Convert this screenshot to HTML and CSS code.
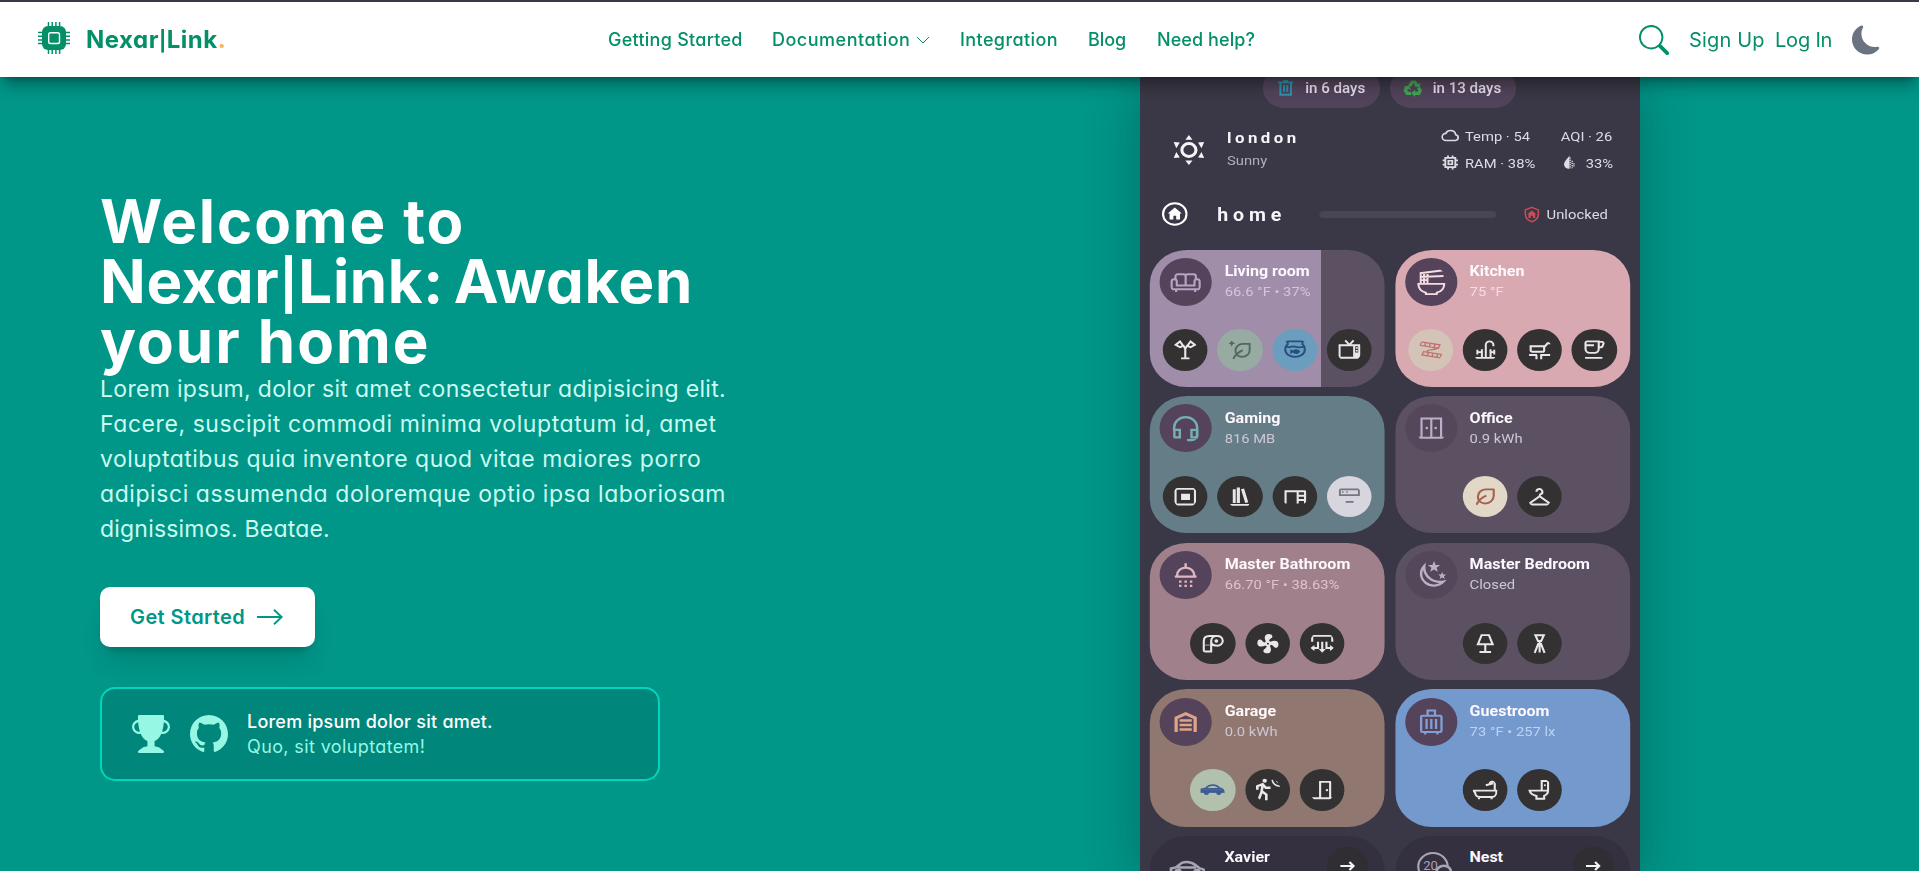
FILE: index.html
```html
<!DOCTYPE html>
<html lang="en">
<head>
<meta charset="utf-8">
<title>Nexar|Link</title>
<link rel="stylesheet" href="styles.css">
</head>
<body>
<svg class="sprite" aria-hidden="true">
  <symbol id="trash" viewBox="0 0 24 24"><path d="M3 4.500h18M5.500 5v16h13V5M10 8v9M14 8v9M9 2.500h6" fill="none" stroke="currentColor" stroke-width="2.400"/></symbol>
  <symbol id="recycle" viewBox="0 0 24 24"><path d="M8.200 9.500 11 4.200h3.500l2.400 4.300M19 11.500l2 4-1.800 3.700h-5M4.500 10.500 3 15.500l2.200 3.700H10" fill="none" stroke="currentColor" stroke-width="4.200"/><path d="m13.500 9.700 6.700 1.700 1.300-6zM14.800 14v10l-4.600-5zM1 10.300l6.600-2 2 6.300z" fill="currentColor"/></symbol>
  <symbol id="sun" viewBox="0 0 24 24"><circle cx="12" cy="12" r="5.200" fill="none" stroke="currentColor" stroke-width="2.300"/><path d="m12 0 2.600 3.700H9.400zM12 24l2.600-3.700H9.400zM.8 5.600l4.500.400-2.600 4.500zM23.200 5.600l-4.500.400 2.600 4.500zM.8 18.400l4.500-.400-2.600-4.500zM23.200 18.400l-4.500-.400 2.600-4.500z" fill="currentColor"/></symbol>
  <symbol id="cloud" viewBox="0 0 24 24"><path d="M6.500 19h12a4 4 0 0 0 .5-7.900C18.500 7.500 15.800 5 12.300 5 9.500 5 7.200 6.600 6.200 9A5 5 0 0 0 6.500 19z" fill="none" stroke="currentColor" stroke-width="2.200"/></symbol>
  <symbol id="chip" viewBox="0 0 24 24"><path d="M5.500 5.500h13v13h-13zM9.500 9.500h5v5h-5zM9 2v3M15 2v3M9 19v3M15 19v3M2 9h3M2 15h3M19 9h3M19 15h3" fill="none" stroke="currentColor" stroke-width="2.400"/></symbol>
  <symbol id="drop" viewBox="0 0 24 24"><path d="M13 1C10 5 5 10.500 5 15a7 7 0 0 0 8 7z" fill="currentColor"/><path d="M14 4v18M17 9v12M19.500 13v6" fill="none" stroke="currentColor" stroke-width="2" stroke-dasharray="2 1.500"/></symbol>
  <symbol id="home" viewBox="0 0 24 24"><circle cx="12" cy="12" r="10.800" fill="none" stroke="currentColor" stroke-width="2"/><path d="m12 5.600 6.500 6h-1.700v5.800h-3.500v-3.600h-2.600v3.600H7.200v-5.800H5.500z" fill="currentColor"/></symbol>
  <symbol id="shield" viewBox="0 0 24 24"><path d="m12 1.800 8.500 3.700V11c0 5-3.500 9.600-8.500 11.200C7 20.600 3.500 16 3.500 11V5.500z" fill="none" stroke="currentColor" stroke-width="2"/><path d="m12 6.500 6 5h-1.600V17h-3v-3.200h-2.800V17h-3v-5.500H6z" fill="currentColor"/></symbol>
  <symbol id="sofa" viewBox="0 0 24 24"><path d="M4.500 10V7.500A1.700 1.700 0 0 1 6.200 5.800h4.300A1.500 1.500 0 0 1 12 7.300a1.500 1.500 0 0 1 1.500-1.500h4.300a1.700 1.700 0 0 1 1.700 1.700V10M12 7v7.800M5.500 14.800V11.700a1.900 1.900 0 0 0-3.800 0v4.600c0 .9.700 1.500 1.500 1.500h17.600c.8 0 1.500-.6 1.500-1.500v-4.600a1.900 1.900 0 0 0-3.800 0v3.100zM5 18v2M19 18v2" fill="none" stroke="currentColor" stroke-width="1.600"/></symbol>
  <symbol id="lamp-duo" viewBox="0 0 24 24"><path d="M12 21V10M8 21h8M12 11l-2-3.500M12 11l2-3.500M3 7l4-3.500 3 4.500-3 1.500zM21 7l-4-3.500L14 8l3 1.500z" fill="none" stroke="currentColor" stroke-width="2"/></symbol>
  <symbol id="leaf" viewBox="0 0 24 24"><path d="M20 4.500h-7.500A7.500 7.500 0 0 0 5 12c0 4.200 3 7 7 7a8 8 0 0 0 8-8zM3.500 20.500c2-4.500 5-7.500 9.500-9.500" fill="none" stroke="currentColor" stroke-width="2"/></symbol>
  <symbol id="leaf-spark" viewBox="0 0 24 24"><path d="M21.500 6h-6.500A7 7 0 0 0 8 13c0 3.800 2.500 6.500 6.500 6.500a7 7 0 0 0 7-7zM6 21.500c2-4.500 5-7 9-9" fill="none" stroke="currentColor" stroke-width="1.800"/><path d="m4.500 2 1 2.500L8 5.500l-2.500 1-1 2.500-1-2.500L1 5.500l2.500-1z" fill="currentColor"/></symbol>
  <symbol id="fishbowl" viewBox="0 0 24 24"><path d="M3 3.500h18M5 4v2.500c-1.500 1.200-2.300 3-2.300 5 0 5.500 4.800 8 9.300 8s9.300-2.500 9.300-8c0-2-.8-3.800-2.300-5V4M3.500 9c3 1.500 5-1.200 8.500 0s5.500 1 8.500 0" fill="none" stroke="currentColor" stroke-width="1.900"/><path d="M7.500 11.500 10 13c2.500-2.500 5.500-1.500 7 1-1.500 2.500-4.500 3.500-7 1l-2.500 1.500z" fill="currentColor"/></symbol>
  <symbol id="tv" viewBox="0 0 24 24"><path d="M2.700 7.500h18.600v12.800H2.700zM8 2.500l4 4.500 4-4.500M16.500 8v12" fill="none" stroke="currentColor" stroke-width="1.900"/><path d="M17 15h4v5h-4zM18 9.500h2v1.500h-2zM18 12.300h2v1.500h-2z" fill="currentColor"/></symbol>
  <symbol id="noodles" viewBox="0 0 24 24"><path d="M2.500 13.500h19c0 3.700-2.200 6-5.500 7v1.200H8v-1.200c-3.300-1-5.500-3.300-5.500-7zM4.200 13V4.600M6.700 13V4.300M9.200 13V4M3.500 5l17.500-2.400M3.500 8 21 7.200M3.500 10.500H9" fill="none" stroke="currentColor" stroke-width="1.500"/></symbol>
  <symbol id="bacon" viewBox="0 0 24 24"><path d="m2.500 4 18 3-1.500 3.500-17-3zM5 14l17 3-1.500 3.500-17-3zM6.500 4.800v3.400M11 5.500v3.400M15.500 6.200v3.400M9 14.800v3.400M13.500 15.500v3.400M18 16.200v3.400M18 10.500c-2 2-7 1-10 3" fill="none" stroke="currentColor" stroke-width="1.300"/></symbol>
  <symbol id="faucet" viewBox="0 0 24 24"><path d="M2.500 20.500h19M12.500 20V7a3.600 3.600 0 0 1 7.200 0v1.500M8.800 20v-8.500M17 20v-8.500M4 14.500h4.500M4.500 12v5M17 14.500h3.500M20.500 12v5" fill="none" stroke="currentColor" stroke-width="1.900"/></symbol>
  <symbol id="pan" viewBox="0 0 24 24"><path d="M3.500 8.500h12.800v4c0 1-.7 1.700-1.700 1.700H5.200c-1 0-1.700-.7-1.700-1.700zM16 10l3.500-4.500H23M2 17.500h7.500M12.500 17.500H22M9 17.500V22M13.500 17.500V22" fill="none" stroke="currentColor" stroke-width="2"/></symbol>
  <symbol id="cup" viewBox="0 0 24 24"><path d="M4 3.500h12.500v7.800a4 4 0 0 1-4 4H8a4 4 0 0 1-4-4zM4 7.500h8M16.500 4h3.700c.8 0 1 .8.900 1.500l-1 3c-.200.700-.7 1-1.300 1h-2.300M3.500 20.500h16.500" fill="none" stroke="currentColor" stroke-width="2"/></symbol>
  <symbol id="headset" viewBox="0 0 24 24"><path d="M3.500 14v-2.200a8.500 8.500 0 0 1 17 0V20c0 1-.8 1.700-1.700 1.700H13" fill="none" stroke="currentColor" stroke-width="1.800"/><path d="M3.700 13.500h4v6h-4zM16.300 13.500h4v6h-4z" fill="none" stroke="currentColor" stroke-width="1.800"/></symbol>
  <symbol id="frame" viewBox="0 0 24 24"><rect x="2.800" y="4" width="18.400" height="16" rx="1.500" fill="none" stroke="currentColor" stroke-width="2"/><path d="M8 9h8.500v6.500H8z" fill="currentColor"/></symbol>
  <symbol id="books" viewBox="0 0 24 24"><path d="M3 19.500h18v2H3zM5.500 4.500h2.800v14H5.500zM9.300 2.500h3v16h-3zM13.300 4.500l2.900-.800 4 14-2.900.800z" fill="currentColor"/></symbol>
  <symbol id="desk" viewBox="0 0 24 24"><path d="M3 19V6.500h18.500V19M14.500 7v12M14.500 11h7M14.500 15.500h7" fill="none" stroke="currentColor" stroke-width="2"/></symbol>
  <symbol id="ac" viewBox="0 0 24 24"><path d="M3 4.500h18v6H3zM8.500 17.500h7.500" fill="none" stroke="currentColor" stroke-width="1.800"/><path d="M5 6.500h1.500v1.500H5zM9 6.500h1.500v1.500H9z" fill="currentColor"/></symbol>
  <symbol id="closet" viewBox="0 0 24 24"><path d="M4.800 19.500V4.300h14.400v15.200M12 4.500v15M2.500 19.700h19" fill="none" stroke="currentColor" stroke-width="1.600"/><circle cx="8.700" cy="12" r="1" fill="currentColor"/><circle cx="15.200" cy="12" r="1" fill="currentColor"/></symbol>
  <symbol id="hanger" viewBox="0 0 24 24"><path d="M9 7a2.800 2.800 0 1 1 4 2.500c-.8.400-1 .800-1 2L3 18.500c-.7.800-.2 1.500.5 1.500h17c.7 0 1.200-.7.500-1.500l-9-7" fill="none" stroke="currentColor" stroke-width="2"/></symbol>
  <symbol id="shower" viewBox="0 0 24 24"><path d="M12 2.500V6M5.700 12.800v-.5a6.300 6.300 0 0 1 12.600 0v.5M4 13.200h16" fill="none" stroke="currentColor" stroke-width="1.800"/><path d="M8 16.300v5.500M12 16.300v5.500M16 16.300v5.500" stroke="currentColor" stroke-width="1.800" stroke-dasharray="1.800 1.700"/></symbol>
  <symbol id="paper" viewBox="0 0 24 24"><path d="M3.800 20V9.500C3.800 6 6 4.200 9 4.200h7M10.800 20V9.500c0-3 1.800-5.300 5-5.300a5 5 0 1 1 0 9.800c-2 0-3.800-.8-4.800-2.500M3 20h8.700" fill="none" stroke="currentColor" stroke-width="2"/><path d="M5.500 13.500h4" stroke="currentColor" stroke-width="1.200" stroke-dasharray="1 .8"/><circle cx="15.700" cy="9.200" r="1.800" fill="currentColor"/></symbol>
  <symbol id="fan" viewBox="0 0 24 24"><path d="M12,11A1,1 0 0,0 11,12A1,1 0 0,0 12,13A1,1 0 0,0 13,12A1,1 0 0,0 12,11M12.500,2C17,2 17.110,5.570 14.750,6.750C13.760,7.240 13.320,8.290 13.130,9.220C13.610,9.420 14.030,9.730 14.350,10.130C18.050,8.130 22.030,8.920 22.030,12.500C22.030,17 18.460,17.100 17.280,14.730C16.780,13.740 15.720,13.300 14.790,13.110C14.590,13.590 14.280,14 13.880,14.340C15.870,18.030 15.080,22 11.500,22C7,22 6.910,18.420 9.270,17.240C10.250,16.750 10.690,15.710 10.890,14.790C10.400,14.590 9.970,14.270 9.650,13.870C5.960,15.850 2,15.070 2,11.500C2,7 5.560,6.890 6.740,9.260C7.240,10.250 8.290,10.680 9.220,10.870C9.410,10.390 9.730,9.970 10.140,9.650C8.150,5.960 8.940,2 12.500,2Z" fill="currentColor"/></symbol>
  <symbol id="vent" viewBox="0 0 24 24"><path d="M2.500 10V4h19v6M12 10v9M8 10v6.500H4M16 10v6.500h4" fill="none" stroke="currentColor" stroke-width="2"/><path d="M8.700 17.500h6.600L12 21.500zM4.600 13.300v6.400L.8 16.500zM19.400 13.300v6.400l3.800-3.200z" fill="currentColor"/></symbol>
  <symbol id="night" viewBox="0 0 24 24"><path d="M6.800 4.800A8.700 8.700 0 1 0 21 17.200C13.500 18.700 6 13 6.800 4.800z" fill="none" stroke="currentColor" stroke-width="1.800"/><path d="m14 .8 1.200 3.100 3.300.100-2.600 2.100.9 3.200L14 7.500l-2.800 1.800.9-3.200L9.500 4l3.300-.1zM20 9.500l.8 2 2.200.100-1.700 1.400.6 2.100-1.900-1.200-1.900 1.200.6-2.100-1.700-1.400 2.200-.1z" fill="currentColor"/></symbol>
  <symbol id="lamp" viewBox="0 0 24 24"><path d="M8.500 3.200h7l3.500 9.500H5zM12 13v7.500M6.500 20.700h11" fill="none" stroke="currentColor" stroke-width="2"/></symbol>
  <symbol id="tower" viewBox="0 0 24 24"><path d="M8 3.300h8l-2.500 6h-3zM12 9v12M11 11.500 7.300 21.500M13 11.500l3.700 10" fill="none" stroke="currentColor" stroke-width="2"/></symbol>
  <symbol id="garage" viewBox="0 0 24 24"><path d="M5 20V8.700L12 5.300l7 3.400V20" fill="none" stroke="currentColor" stroke-width="2.400"/><path d="M7.500 9.700h9v2h-9zM7.500 13.300h9v2h-9zM7.500 17h9v2h-9z" fill="currentColor"/></symbol>
  <symbol id="sportcar" viewBox="0 0 24 24"><path d="M1.500 14.500v-2.800l4-1.200c2-2.200 4-3.200 7-3.200 2.500 0 4.500 1.200 6 3 2.500.3 4 1.500 4.300 4.200zM5 11h14" fill="none" stroke="currentColor" stroke-width="1.600"/><path d="M1.500 11.500h20l1.300 3.500H1.500z" fill="currentColor"/><circle cx="6.300" cy="15" r="2.500" fill="currentColor"/><circle cx="18" cy="15" r="2.500" fill="currentColor"/></symbol>
  <symbol id="walk" viewBox="0 0 24 24"><circle cx="9" cy="2.800" r="2.100" fill="currentColor"/><path d="M2 12V8.500l5-2.200 3 3.700h4.500M7 7l-1 7.500L3 23M6.500 14l4 3V23" fill="none" stroke="currentColor" stroke-width="2.500"/><path d="M24 8.500A7.500 7.500 0 0 1 16 2M24 5A4 4 0 0 1 20 1.500" fill="none" stroke="currentColor" stroke-width="1.500"/></symbol>
  <symbol id="door" viewBox="0 0 24 24"><path d="M0 20.800h21.500M10 20.500V4h9.500v17" fill="none" stroke="currentColor" stroke-width="2"/><circle cx="16.500" cy="12.500" r="1.200" fill="currentColor"/></symbol>
  <symbol id="bag" viewBox="0 0 24 24"><path d="M5.500 7h13c.6 0 1 .4 1 1v11c0 .6-.4 1-1 1h-13c-.6 0-1-.4-1-1V8c0-.6.400-1 1-1zM9.300 7V2.800h5.400V7M8.500 9.500v8M12 9.500v8M15.500 9.500v8M7.500 20v2M16.500 20v2" fill="none" stroke="currentColor" stroke-width="1.700"/></symbol>
  <symbol id="bath" viewBox="0 0 24 24"><path d="M1 13h21.500v2.500a4 4 0 0 1-4 4H6.500a4 4 0 0 1-4-4zM21 13V5.500c0-2.500-4-2.500-5 .3M12.500 7.500l7-2M6 19.500V22M18 19.500V22" fill="none" stroke="currentColor" stroke-width="2"/></symbol>
  <symbol id="toilet" viewBox="0 0 24 24"><path d="M14 13V3h6v10c0 3-1.500 4.500-3.700 5.500v2.800H9v-2.800C5.500 17.500 3 15.500 2.500 13zM2 13h18" fill="none" stroke="currentColor" stroke-width="2"/><circle cx="17" cy="7.500" r="1" fill="currentColor"/></symbol>
  <symbol id="bigcar" viewBox="0 0 34 26"><path d="M2 13V8.500l4.500-1L12 2.800C16 1.500 21 2 25 5.500l3 2.500 4 1.500v7H2zM8 7.500h17" fill="none" stroke="currentColor" stroke-width="2.400"/><circle cx="8.500" cy="12" r="3.500" fill="currentColor"/><circle cx="26" cy="12" r="3.500" fill="currentColor"/></symbol>
  <symbol id="arrow" viewBox="0 0 24 24"><path d="M2 12h18M14.500 6l5.700 6-5.700 6" fill="none" stroke="currentColor" stroke-width="3"/></symbol>
</svg>

<div class="topline"></div>
<header class="header">
  <a class="brand">
    <svg class="brand-icon" viewBox="0 0 32 32"><rect x="4" y="4" width="24" height="24" rx="6" fill="currentColor"/><path d="M10.500 0v5M14.200 0v5M17.900 0v5M21.600 0v5M10.500 27v5M14.200 27v5M17.900 27v5M21.600 27v5M0 10.500h5M0 14.200h5M0 17.900h5M0 21.600h5M27 10.500h5M27 14.200h5M27 17.900h5M27 21.600h5" stroke="currentColor" stroke-width="1.500"/><rect x="10.700" y="10.700" width="10.800" height="10.800" rx="1.800" fill="none" stroke="#fff" stroke-width="1.400"/></svg>
    <span class="brand-name">Nexar<span class="bar">|</span>Link<span class="dot">.</span></span>
  </a>
  <nav class="nav">
    <a class="n1">Getting Started</a>
    <a class="n2">Documentation<svg class="chevron" viewBox="0 0 14 8"><path d="m1 1 6 6 6-6" fill="none" stroke="currentColor"/></svg></a>
    <a class="n3">Integration</a>
    <a class="n4">Blog</a>
    <a class="n5">Need help?</a>
  </nav>
  <div class="tools">
    <svg class="search" viewBox="0 0 16 16"><path fill="currentColor" d="M11.742 10.344a6.500 6.500 0 1 0-1.397 1.398h-.001q.044.060.098.115l3.850 3.850a1 1 0 0 0 1.415-1.414l-3.850-3.850a1 1 0 0 0-.115-.1zM12 6.500a5.500 5.500 0 1 1-11 0 5.500 5.500 0 0 1 11 0"/></svg>
    <a class="signup">Sign Up</a>
    <a class="login">Log In</a>
    <svg class="moon" viewBox="0 0 16 16"><path fill="currentColor" d="M6 .278a.77.77 0 0 1 .08.858 7.200 7.200 0 0 0-.878 3.460c0 4.021 3.278 7.277 7.318 7.277q.792-.001 1.533-.16a.79.79 0 0 1 .81.316.73.73 0 0 1-.031.893A8.350 8.350 0 0 1 8.344 16C3.734 16 0 12.286 0 7.710 0 4.266 2.114 1.312 5.124.060A.75.75 0 0 1 6 .278"/></svg>
  </div>
</header>

<main class="hero">
  <section class="intro">
    <h1 class="title"><span class="t1">Welcome to</span><span class="t2">Nexar<span class="bar">|</span>Link: Awaken</span><span class="t3">your home</span></h1>
    <p class="lead"><span class="p1">Lorem ipsum, dolor sit amet consectetur adipisicing elit.</span><span class="p2">Facere, suscipit commodi minima voluptatum id, amet</span><span class="p3">voluptatibus quia inventore quod vitae maiores porro</span><span class="p4">adipisci assumenda doloremque optio ipsa laboriosam</span><span class="p5">dignissimos. Beatae.</span></p>
    <a class="cta">Get Started<svg class="cta-arrow" viewBox="0 0 26 16"><path d="M0 8h24.500M17 .7 24.700 8 17 15.300" fill="none" stroke="currentColor" stroke-width="1.900"/></svg></a>
    <div class="award">
      <svg class="award-icon" viewBox="0 0 16 16"><path fill="currentColor" d="M2.500.5A.5.5 0 0 1 3 0h10a.5.5 0 0 1 .5.5q0 .807-.034 1.536a3 3 0 1 1-1.133 5.890c-.79 1.865-1.878 2.777-2.833 3.011v2.173l1.425.356c.194.048.377.135.537.255L13.300 15.100a.5.5 0 0 1-.3.9H3a.5.5 0 0 1-.3-.9l1.838-1.379c.16-.12.343-.207.537-.255L6.500 13.110v-2.173c-.955-.234-2.043-1.146-2.833-3.012a3 3 0 1 1-1.132-5.890A33 33 0 0 1 2.500.5m.099 2.540a2 2 0 0 0 .72 3.935c-.333-1.050-.588-2.346-.72-3.935m10.083 3.935a2 2 0 0 0 .72-3.935c-.133 1.590-.388 2.885-.72 3.935"/></svg>
      <svg class="award-icon" viewBox="0 0 16 16"><path fill="currentColor" d="M8 0C3.580 0 0 3.580 0 8c0 3.540 2.290 6.530 5.470 7.590.4.070.55-.17.55-.38 0-.19-.01-.82-.01-1.490-2.010.37-2.530-.49-2.690-.94-.09-.23-.48-.94-.82-1.130-.28-.15-.68-.52-.01-.53.63-.01 1.080.58 1.230.82.72 1.210 1.870.87 2.330.66.070-.52.280-.87.510-1.070-1.780-.2-3.640-.89-3.640-3.950 0-.87.31-1.590.82-2.150-.08-.2-.36-1.020.08-2.120 0 0 .67-.21 2.200.82.64-.18 1.320-.27 2-.27s1.360.09 2 .27c1.530-1.040 2.200-.82 2.200-.82.44 1.100.16 1.920.08 2.120.51.560.82 1.270.82 2.150 0 3.070-1.870 3.750-3.650 3.950.29.250.54.730.54 1.480 0 1.070-.01 1.930-.01 2.200 0 .21.150.46.550.38A8.010 8.010 0 0 0 16 8c0-4.420-3.580-8-8-8"/></svg>
      <div class="award-text"><strong>Lorem ipsum dolor sit amet.</strong><span>Quo, sit voluptatem!</span></div>
    </div>
  </section>

  <section class="device-slot">
    <div class="device">
      <div class="pills">
        <div class="pill"><svg class="blue"><use href="#trash"/></svg>in 6 days</div>
        <div class="pill"><svg class="green"><use href="#recycle"/></svg>in 13 days</div>
      </div>
      <div class="weather">
        <svg class="sun"><use href="#sun"/></svg>
        <div class="place"><b>london</b><span>Sunny</span></div>
        <div class="stats">
          <svg><use href="#cloud"/></svg><span>Temp · 54</span><span class="aqi">AQI · 26</span>
          <svg><use href="#chip"/></svg><span>RAM · 38%</span><svg class="humid"><use href="#drop"/></svg><span>33%</span>
        </div>
      </div>
      <div class="homebar">
        <svg class="homeicon"><use href="#home"/></svg><b>home</b><i></i><svg class="shield"><use href="#shield"/></svg><span>Unlocked</span>
      </div>
      <div class="rooms">
        <article class="room living"><div class="head"><svg><use href="#sofa"/></svg><div><b>Living room</b><span>66.6 °F • 37%</span></div></div>
          <div class="acts"><svg><use href="#lamp-duo"/></svg><svg class="sage"><use href="#leaf-spark"/></svg><svg class="aqua"><use href="#fishbowl"/></svg><svg><use href="#tv"/></svg></div></article>
        <article class="room kitchen"><div class="head"><svg><use href="#noodles"/></svg><div><b>Kitchen</b><span>75 °F</span></div></div>
          <div class="acts"><svg class="toast"><use href="#bacon"/></svg><svg><use href="#faucet"/></svg><svg><use href="#pan"/></svg><svg><use href="#cup"/></svg></div></article>
        <article class="room gaming"><div class="head"><svg><use href="#headset"/></svg><div><b>Gaming</b><span>816 MB</span></div></div>
          <div class="acts"><svg><use href="#frame"/></svg><svg><use href="#books"/></svg><svg><use href="#desk"/></svg><svg class="pale"><use href="#ac"/></svg></div></article>
        <article class="room plain"><div class="head"><svg><use href="#closet"/></svg><div><b>Office</b><span>0.9 kWh</span></div></div>
          <div class="acts"><svg class="cream"><use href="#leaf"/></svg><svg><use href="#hanger"/></svg></div></article>
        <article class="room bathroom"><div class="head"><svg><use href="#shower"/></svg><div><b>Master Bathroom</b><span>66.70 °F • 38.63%</span></div></div>
          <div class="acts"><svg><use href="#paper"/></svg><svg><use href="#fan"/></svg><svg><use href="#vent"/></svg></div></article>
        <article class="room plain"><div class="head"><svg><use href="#night"/></svg><div><b>Master Bedroom</b><span>Closed</span></div></div>
          <div class="acts"><svg><use href="#lamp"/></svg><svg><use href="#tower"/></svg></div></article>
        <article class="room garage"><div class="head"><svg><use href="#garage"/></svg><div><b>Garage</b><span>0.0 kWh</span></div></div>
          <div class="acts"><svg class="mint"><use href="#sportcar"/></svg><svg><use href="#walk"/></svg><svg><use href="#door"/></svg></div></article>
        <article class="room guest"><div class="head"><svg><use href="#bag"/></svg><div><b>Guestroom</b><span>73 °F • 257 lx</span></div></div>
          <div class="acts"><svg><use href="#bath"/></svg><svg><use href="#toilet"/></svg></div></article>
        <article class="room extra"><svg class="carpic"><use href="#bigcar"/></svg><b>Xavier</b><svg class="go"><use href="#arrow"/></svg></article>
        <article class="room extra"><span class="ring">20<svg viewBox="0 0 20 20"><circle cx="10" cy="10" r="8" fill="#34303f" stroke="#a9a5b5" stroke-width="3"/></svg></span><b>Nest</b><svg class="go"><use href="#arrow"/></svg></article>
      </div>
    </div>
  </section>
</main>
</body>
</html>
```
FILE: styles.css
```css
* { box-sizing: border-box; }
body { margin: 0; height: 871px; overflow: hidden; background: #009688; font-family: Inter, "Open Sans", sans-serif; font-feature-settings: "cv11"; }
svg { display: block; flex: none; }
.sprite { position: absolute; width: 0; height: 0; }
.topline { height: 2px; background: #3a3a4a; }
.header { position: relative; z-index: 2; height: 75px; background: #fff; color: #048f69; display: grid; grid-template-columns: 608px 1fr auto; align-items: center; padding-right: 38px; box-shadow: 0 10px 15px -3px rgba(0,0,0,.36), 0 4px 6px -4px rgba(0,0,0,.3); }
.brand { display: flex; align-items: center; gap: 16px; padding-left: 38px; }
.brand-icon { width: 32px; height: 32px; margin-top: -4px; }
.brand-name { font-size: 24px; font-weight: 650; letter-spacing: .5px; line-height: 30px; padding-top: 1px; }
.bar { font-size: .82em; line-height: 0; font-weight: 700; position: relative; top: -.02em; }
.dot { color: #fdb14f; }
.nav { display: flex; font-size: 18px; font-weight: 500; line-height: 24px; gap: 30px; white-space: nowrap; }
.nav a { height: 24px; }
.n1 { width: 134px; letter-spacing: .26px; }
.n2 { width: 158px; letter-spacing: .5px; display: flex; align-items: center; gap: 6px; }
.chevron { width: 14px; height: 8px; }
.n3 { width: 98px; letter-spacing: .4px; }
.n4 { width: 39px; letter-spacing: -.1px; }
.n5 { letter-spacing: .08px; }
.tools { display: flex; align-items: center; font-size: 20px; line-height: 26px; }
.search { width: 30px; height: 30px; margin-right: 20px; }
.signup { width: 86px; letter-spacing: .15px; }
.login { width: 77px; letter-spacing: -.2px; }
.moon { width: 29px; height: 30px; color: #6b7280; }
.tools a { padding-top: 1px; }

.hero { display: flex; height: 794px; overflow: hidden; }
.intro { width: 1140px; padding: 114px 0 0 100px; }
.title { margin: 0; color: #fff; font-size: 60px; line-height: 60px; font-weight: 650; white-space: nowrap; }
.title > span, .lead > span { display: block; }
.t1 { letter-spacing: 1.900px; }
.t2 { letter-spacing: .65px; word-spacing: -5px; }
.t3 { letter-spacing: 2px; }
.lead { margin: 0; padding-top: 1px; color: #cbfbf1; font-size: 23px; line-height: 35px; white-space: nowrap; }
.p1 { letter-spacing: .31px; }
.p2 { letter-spacing: .57px; }
.p3 { letter-spacing: .48px; }
.p4 { letter-spacing: .57px; }
.p5 { letter-spacing: .2px; }
.cta { margin-top: 40px; width: 215px; height: 60px; padding-left: 30px; display: flex; align-items: center; gap: 12px; background: #fff; border-radius: 10px; color: #009688; font-size: 20px; font-weight: 600; letter-spacing: .4px; box-shadow: 0 20px 25px -5px rgba(0,0,0,.1), 0 8px 10px -6px rgba(0,0,0,.2); }
.cta-arrow { width: 26px; height: 16px; }
.award { margin-top: 40px; width: 560px; height: 94px; padding-left: 30px; display: flex; align-items: center; gap: 20px; border: 2px solid #00d5be; border-radius: 15px; background: #00867a; color: #96f7e4; }
.award-icon { width: 38px; height: 38px; }
.award-text { display: grid; line-height: 25px; font-size: 18px; margin-left: -1px; }
.award-text strong { color: #fff; font-weight: 500; letter-spacing: .23px; }
.award-text span { letter-spacing: .38px; }

.device-slot { width: 500px; height: 794px; background: #3a3746; box-shadow: 0 10px 50px rgba(0,0,0,.25); }
.device { width: 460px; height: 794px; overflow: hidden; transform: scaleX(1.08696); transform-origin: 0 0; font-family: Roboto, sans-serif; font-size: 13.600px; color: #dedbe4; }
.pills { display: flex; gap: 9px; margin-top: -9px; padding-left: 113px; }
.pill { height: 40px; padding: 0 14px 0 12px; display: flex; align-items: center; gap: 9px; border-radius: 20px; background: #51445a; font-weight: 500; font-size: 13.900px; color: #e8dff0; }
.pill svg { width: 18px; height: 18px; }
.blue { color: #2b93ad; }
.green { color: #43a352; }
.weather { display: flex; height: 72px; padding: 20px 0 0 30px; }
.sun { width: 30px; height: 34px; margin-top: 5px; color: #f5f4f7; }
.place { width: 218px; padding-left: 20px; display: flex; flex-direction: column; line-height: 23px; }
.place b { font-size: 15.500px; letter-spacing: 3.200px; line-height: 21px; color: #f7f5fa; }
.place span { color: #b3aebd; }
.stats { display: grid; grid-template-columns: 22px 88px 23px auto; grid-auto-rows: 27px; align-items: center; margin-top: -6px; margin-left: -1px; }
.stats svg { width: 17px; height: 17px; }
.stats .humid { width: 15px; height: 15px; }
.aqi { grid-column: 3 / 5; }
.homebar { display: flex; align-items: center; height: 69px; padding: 0 0 1px 20px; }
.homeicon { width: 24px; height: 24px; color: #fff; }
.homebar b { box-sizing: content-box; width: 68px; padding-left: 27px; font-size: 18px; letter-spacing: 4.500px; color: #f7f5fa; }
.homebar i { width: 163px; height: 7px; margin: 0 24px 0 26px; border-radius: 4px; background: #4a4555; }
.shield { width: 17px; height: 17px; color: #cf4a55; margin-right: 5px; }
.homebar span { letter-spacing: .05px; }
.rooms { display: grid; grid-template-columns: 216.200px 216.200px; grid-auto-rows: 137.400px; gap: 9.200px; padding: .5px 9.200px 0; }
.room { border-radius: 34px; padding: 8.300px 0 0 9.200px; color: #cdc7d4; }
.head { display: flex; height: 48px; gap: 11.500px; }
.head > svg { width: 48px; height: 48px; padding: 9px; border-radius: 50%; background: #54435a; }
.head > div { display: flex; flex-direction: column; padding-top: 3.500px; }
.room b { font-size: 14.750px; line-height: 20px; color: #fdf8fd; white-space: nowrap; }
.head span { line-height: 21px; }
.acts { display: flex; justify-content: center; gap: 9px; margin: 23.700px 0 0 -9.200px; }
.acts svg { width: 41.300px; height: 41.300px; padding: 9px; border-radius: 50%; background: #333132; color: #e9e7ea; }
.living { background: linear-gradient(90deg, #9f8da9 73%, #5b5163 73%); }
.living .head { color: #d5c3df; }
.living .head > svg { color: #b7a3c2; }
.kitchen { background: #d9a9b1; }
.kitchen .head { color: #f6dce2; }
.gaming { background: #657d87; }
.gaming .head > svg { color: #75aeb3; }
.plain { background: #5b5163; }
.plain .head > svg { color: #b9afc7; background: #54475a; }
.bathroom { background: #a0808a; color: #dcc3cd; }
.bathroom .head > svg { color: #e0b6c2; }
.garage { background: #90776f; }
.garage .head > svg { color: #dda585; }
.guest { background: #7499cd; color: #bed3f0; }
.guest .head > svg { color: #839fd6; }
.acts .sage { background: #97aba3; color: #50685f; }
.acts .aqua { background: #6b9dbf; color: #26517d; }
.acts .toast { background: #d4c4b8; color: #bf716f; }
.acts .pale { background: #d7d5dd; color: #777582; }
.acts .cream { background: #e2d8c8; color: #a4614e; }
.acts .mint { background: #b2c0ae; color: #3d5d91; }
.extra { background: #34303f; display: flex; align-items: flex-start; padding: 0 0 0 17px; }
.extra b { margin-top: 11.500px; flex: 1; }
.carpic { width: 35px; height: 26px; margin: 24px 16.500px 0 0; color: #a9a5b5; }
.go { width: 38px; height: 38px; padding: 11px; margin: 11.500px 15px 0 0; border-radius: 50%; background: #302d33; color: #f4f4f4; }
.ring { position: relative; width: 29px; height: 29px; margin: 16px 19.500px 0 3px; border: 2.500px solid #a9a5b5; border-radius: 50%; color: #a9a5b5; font-size: 12px; line-height: 25px; padding-left: 4px; }
.ring svg { position: absolute; left: 14px; top: 10px; width: 17px; height: 17px; }
```
